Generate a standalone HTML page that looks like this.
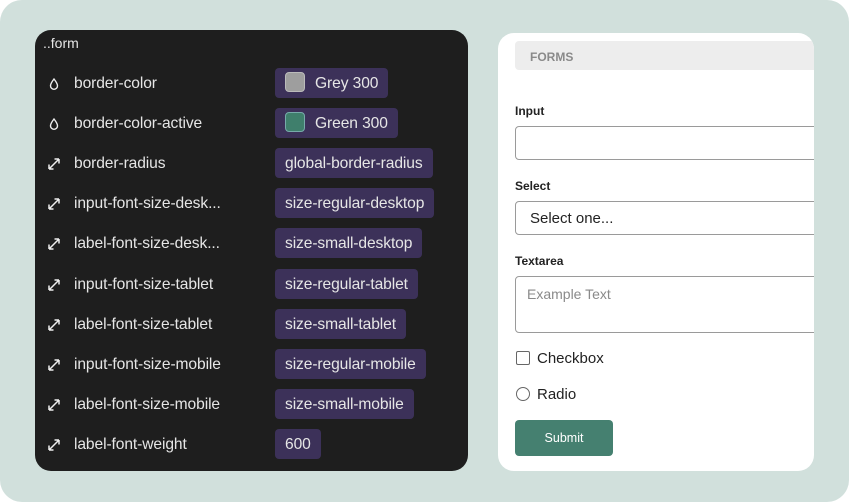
<!DOCTYPE html>
<html><head><style>
*{margin:0;padding:0;box-sizing:border-box}
body{width:849px;height:502px;background:#fff;font-family:"Liberation Sans",Arial,sans-serif;overflow:hidden}
.bg{position:absolute;left:0;top:0;width:849px;height:502px;background:#d1e0dc;border-radius:22px}
.left{position:absolute;left:35px;top:30px;width:433px;height:441px;background:#1e1e1e;border-radius:16px;color:#e6e6e6}
.title{position:absolute;left:8px;top:5px;font-size:14px}
.row{position:absolute;left:0;height:30px;width:100%}
.ic{position:absolute;left:12px;top:9px;width:14px;height:14px}
.name{position:absolute;left:39px;top:7px;font-size:15.6px;letter-spacing:-0.1px}
.pill{position:absolute;left:240px;top:0;height:30px;background:#3c3159;border-radius:4px;font-size:15.6px;letter-spacing:-0.1px;line-height:31px;padding:0 10px;white-space:nowrap}
.sw{display:inline-block;width:20px;height:20px;border-radius:4px;vertical-align:middle;margin:-3px 10px 0 0;border:1px solid #bbb}
.right{position:absolute;left:498px;top:33px;width:316px;height:438px;background:#fff;border-radius:16px;overflow:hidden;color:#222}
.bar{position:absolute;left:17px;top:8px;width:320px;height:29px;background:#ededed;border-radius:4px;font-size:12px;font-weight:bold;color:#8a8a8a;padding:9px 0 0 15px}
.lab{position:absolute;left:17px;font-size:12px;font-weight:bold}
.box{position:absolute;left:17px;width:320px;border:1px solid #9a9a9a;border-radius:4px;font-size:15px;padding-left:14px}
</style></head><body>
<div class="bg"></div>
<div class="left">
<div class="title">..form</div>
<div class="row" style="top:38px"><svg class="ic" viewBox="0 0 14 14"><path d="M7 2 C7 2 3.5 6.5 3.5 8.8 A3.5 3.5 0 0 0 10.5 8.8 C10.5 6.5 7 2 7 2Z" fill="none" stroke="#eee" stroke-width="1.4"/></svg><span class="name">border-color</span><span class="pill"><span class="sw" style="background:#9e9e9e"></span>Grey 300</span></div>
<div class="row" style="top:78px"><svg class="ic" viewBox="0 0 14 14"><path d="M7 2 C7 2 3.5 6.5 3.5 8.8 A3.5 3.5 0 0 0 10.5 8.8 C10.5 6.5 7 2 7 2Z" fill="none" stroke="#eee" stroke-width="1.4"/></svg><span class="name">border-color-active</span><span class="pill"><span class="sw" style="background:#3f7f6c;border-color:#7aa"></span>Green 300</span></div>
<div class="row" style="top:118px"><svg class="ic" viewBox="0 0 14 14"><path d="M2 12 L12 2 M2 12 V7.5 M2 12 H6.5 M12 2 V6.5 M12 2 H7.5" stroke="#eee" stroke-width="1.5" fill="none"/></svg><span class="name">border-radius</span><span class="pill">global-border-radius</span></div>
<div class="row" style="top:158px"><svg class="ic" viewBox="0 0 14 14"><path d="M2 12 L12 2 M2 12 V7.5 M2 12 H6.5 M12 2 V6.5 M12 2 H7.5" stroke="#eee" stroke-width="1.5" fill="none"/></svg><span class="name">input-font-size-desk...</span><span class="pill">size-regular-desktop</span></div>
<div class="row" style="top:198px"><svg class="ic" viewBox="0 0 14 14"><path d="M2 12 L12 2 M2 12 V7.5 M2 12 H6.5 M12 2 V6.5 M12 2 H7.5" stroke="#eee" stroke-width="1.5" fill="none"/></svg><span class="name">label-font-size-desk...</span><span class="pill">size-small-desktop</span></div>
<div class="row" style="top:239px"><svg class="ic" viewBox="0 0 14 14"><path d="M2 12 L12 2 M2 12 V7.5 M2 12 H6.5 M12 2 V6.5 M12 2 H7.5" stroke="#eee" stroke-width="1.5" fill="none"/></svg><span class="name">input-font-size-tablet</span><span class="pill">size-regular-tablet</span></div>
<div class="row" style="top:279px"><svg class="ic" viewBox="0 0 14 14"><path d="M2 12 L12 2 M2 12 V7.5 M2 12 H6.5 M12 2 V6.5 M12 2 H7.5" stroke="#eee" stroke-width="1.5" fill="none"/></svg><span class="name">label-font-size-tablet</span><span class="pill">size-small-tablet</span></div>
<div class="row" style="top:319px"><svg class="ic" viewBox="0 0 14 14"><path d="M2 12 L12 2 M2 12 V7.5 M2 12 H6.5 M12 2 V6.5 M12 2 H7.5" stroke="#eee" stroke-width="1.5" fill="none"/></svg><span class="name">input-font-size-mobile</span><span class="pill">size-regular-mobile</span></div>
<div class="row" style="top:359px"><svg class="ic" viewBox="0 0 14 14"><path d="M2 12 L12 2 M2 12 V7.5 M2 12 H6.5 M12 2 V6.5 M12 2 H7.5" stroke="#eee" stroke-width="1.5" fill="none"/></svg><span class="name">label-font-size-mobile</span><span class="pill">size-small-mobile</span></div>
<div class="row" style="top:399px"><svg class="ic" viewBox="0 0 14 14"><path d="M2 12 L12 2 M2 12 V7.5 M2 12 H6.5 M12 2 V6.5 M12 2 H7.5" stroke="#eee" stroke-width="1.5" fill="none"/></svg><span class="name">label-font-weight</span><span class="pill">600</span></div>
</div>
<div class="right">
<div class="bar">FORMS</div>
<div class="lab" style="top:71px">Input</div>
<div class="box" style="top:93px;height:34px"></div>
<div class="lab" style="top:146px">Select</div>
<div class="box" style="top:168px;height:34px;line-height:33px">Select one...</div>
<div class="lab" style="top:221px">Textarea</div>
<div class="box" style="top:243px;height:57px;padding-top:9px;font-size:14px;color:#8a8a8a;padding-left:11px">Example Text</div>
<div style="position:absolute;left:18px;top:318px;width:14px;height:14px;border:1px solid #666;border-radius:2px"></div>
<div style="position:absolute;left:39px;top:317px;font-size:15px">Checkbox</div>
<div style="position:absolute;left:18px;top:354px;width:14px;height:14px;border:1px solid #666;border-radius:50%"></div>
<div style="position:absolute;left:39px;top:353px;font-size:15px">Radio</div>
<div style="position:absolute;left:17px;top:387px;width:98px;height:36px;background:#458070;border-radius:4px;color:#fff;font-size:12.5px;text-align:center;line-height:36px">Submit</div>
</div>
</body></html>
